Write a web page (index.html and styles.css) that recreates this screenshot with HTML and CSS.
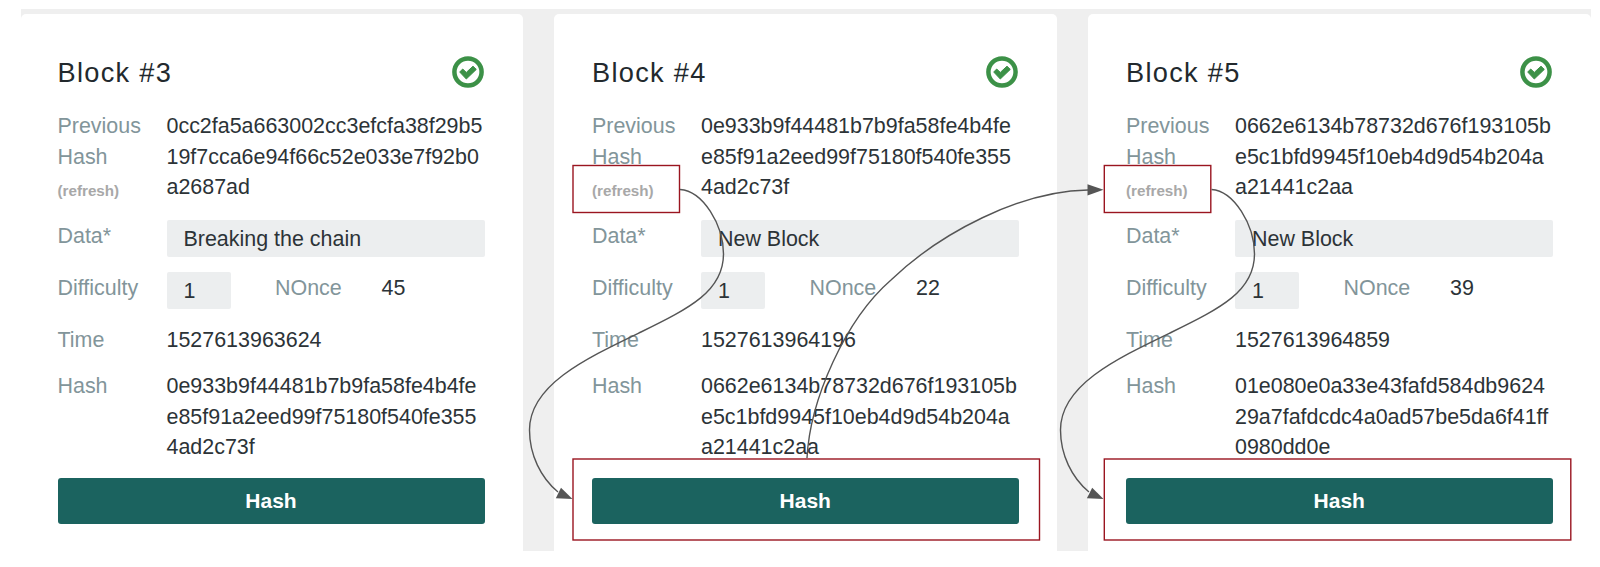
FILE: index.html
```html
<!DOCTYPE html>
<html lang="en">
<head>
  <meta charset="UTF-8">
  <meta name="viewport" content="width=device-width, initial-scale=1.0">
  <title>Blockchain</title>
  <link rel="stylesheet" href="styles.css">
</head>
<body>
  <svg class="defs" width="0" height="0">
    <symbol id="check" viewBox="-16 -16 32 32">
      <circle r="13.6" fill="none" stroke="#3c9147" stroke-width="4.5"/>
      <path d="M-8.3 0L-5.3 -3L-1.7 .4L5 -5.8L8.3 -2.6L-1.7 7Z" fill="#3c9147" stroke="#3c9147" stroke-width="1" stroke-linejoin="round"/>
    </symbol>
  </svg>

  <div class="chain">
    <div class="block">
      <div class="block-header">
        <h2 class="block-title">Block #3</h2>
        <svg class="block-status"><use href="#check"/></svg>
      </div>
      <div class="row row-previous">
        <div class="label">Previous Hash <span class="refresh">(refresh)</span></div>
        <div class="value">0cc2fa5a663002cc3efcfa38f29b5<br>19f7cca6e94f66c52e033e7f92b0<br>a2687ad</div>
      </div>
      <div class="row row-data">
        <div class="label">Data*</div>
        <div class="field">Breaking the chain</div>
      </div>
      <div class="row row-difficulty">
        <div class="label">Difficulty</div>
        <div class="field">1</div>
        <div class="label">NOnce</div>
        <div class="value">45</div>
      </div>
      <div class="row row-time">
        <div class="label">Time</div>
        <div class="value">1527613963624</div>
      </div>
      <div class="row row-hash">
        <div class="label">Hash</div>
        <div class="value">0e933b9f44481b7b9fa58fe4b4fe<br>e85f91a2eed99f75180f540fe355<br>4ad2c73f</div>
      </div>
      <button class="hash-button">Hash</button>
    </div>

    <div class="block">
      <div class="block-header">
        <h2 class="block-title">Block #4</h2>
        <svg class="block-status"><use href="#check"/></svg>
      </div>
      <div class="row row-previous">
        <div class="label">Previous Hash <span class="refresh">(refresh)</span></div>
        <div class="value">0e933b9f44481b7b9fa58fe4b4fe<br>e85f91a2eed99f75180f540fe355<br>4ad2c73f</div>
      </div>
      <div class="row row-data">
        <div class="label">Data*</div>
        <div class="field">New Block</div>
      </div>
      <div class="row row-difficulty">
        <div class="label">Difficulty</div>
        <div class="field">1</div>
        <div class="label">NOnce</div>
        <div class="value">22</div>
      </div>
      <div class="row row-time">
        <div class="label">Time</div>
        <div class="value">1527613964196</div>
      </div>
      <div class="row row-hash">
        <div class="label">Hash</div>
        <div class="value">0662e6134b78732d676f193105b<br>e5c1bfd9945f10eb4d9d54b204a<br>a21441c2aa</div>
      </div>
      <button class="hash-button">Hash</button>
    </div>

    <div class="block">
      <div class="block-header">
        <h2 class="block-title">Block #5</h2>
        <svg class="block-status"><use href="#check"/></svg>
      </div>
      <div class="row row-previous">
        <div class="label">Previous Hash <span class="refresh">(refresh)</span></div>
        <div class="value">0662e6134b78732d676f193105b<br>e5c1bfd9945f10eb4d9d54b204a<br>a21441c2aa</div>
      </div>
      <div class="row row-data">
        <div class="label">Data*</div>
        <div class="field">New Block</div>
      </div>
      <div class="row row-difficulty">
        <div class="label">Difficulty</div>
        <div class="field">1</div>
        <div class="label">NOnce</div>
        <div class="value">39</div>
      </div>
      <div class="row row-time">
        <div class="label">Time</div>
        <div class="value">1527613964859</div>
      </div>
      <div class="row row-hash">
        <div class="label">Hash</div>
        <div class="value">01e080e0a33e43fafd584db9624<br>29a7fafdcdc4a0ad57be5da6f41ff<br>0980dd0e</div>
      </div>
      <button class="hash-button">Hash</button>
    </div>
  </div>

  <!-- Refresh / hash order, drawn over the blocks -->
  <svg class="overlay" viewBox="0 0 1600 567">
    <g class="marks">
      <rect x="573" y="165.5" width="106.5" height="47"/>
      <rect x="573" y="459" width="466.5" height="81"/>
      <rect x="1104.3" y="165.5" width="106.5" height="47"/>
      <rect x="1104.3" y="459" width="466.5" height="81"/>
    </g>
    <g class="arrows">
      <path d="M680 189.5C703 191 723.5 225 723.5 254C723.5 291 690 308 641 332C585 359 529.5 385 529.5 430C529.5 455 541 478 558 492"/>
      <path d="M807 458C810 400 845 320 891 280C940 233 1020 191 1088 190"/>
      <path d="M1211.5 189.5C1234 191 1254.5 225 1254.5 254C1254.5 291 1221 308 1172 332C1116 359 1060.5 385 1060.5 430C1060.5 455 1072 478 1089 492"/>
    </g>
    <g class="heads">
      <path d="M572.5 499L561 487.8L555.8 498.3Z"/>
      <path d="M1103.5 189.7L1087.5 184.2V195.5Z"/>
      <path d="M1103.5 499L1092.2 487.8L1086.9 498.3Z"/>
    </g>
  </svg>
</body>
</html>
```

FILE: styles.css
```css
* {
  margin: 0;
  padding: 0;
  box-sizing: border-box;
}

body {
  font-family: "Liberation Sans", Arial, sans-serif;
  font-size: 21.45px;
  line-height: 30.67px;
  color: #2c3337;
  background: #fff;
  height: 567px;
  padding: 9px 9px 16px 21px;
  position: relative;
  overflow: hidden;
}

.defs {
  display: block;
}

.chain {
  display: grid;
  grid-template-columns: 502px 503.5px 503.5px;
  column-gap: 30.5px;
  height: 542px;
  padding-top: 5px;
  background: #efefef;
}

.block {
  background: #fff;
  border-radius: 5px 5px 0 0;
  padding: 42px 38.5px 0;
}

.block:first-child {
  padding-left: 36.5px;
}

.block-header {
  display: flex;
  justify-content: space-between;
  align-items: flex-start;
  height: 55px;
}

.block-title {
  font-size: 27.2px;
  font-weight: normal;
  letter-spacing: 1.3px;
  line-height: 33px;
  color: #22292d;
}

.block-status {
  width: 32px;
  height: 32px;
  margin-right: 1px;
}

.row {
  display: grid;
  grid-template-columns: 109px 1fr;
  align-items: start;
}

.row-previous {
  height: 109px;
}

.row-data {
  height: 52px;
}

.row-data .label,
.row-difficulty .label,
.row-difficulty .value {
  padding-top: 1px;
}

.row-difficulty {
  grid-template-columns: 109px 108.5px 106.5px 1fr;
  height: 53px;
}

.row-time {
  height: 46px;
}

.row-hash {
  height: 107px;
}

.label {
  color: #82959a;
}

.refresh {
  display: block;
  font-size: 15.2px;
  font-weight: bold;
  line-height: 37px;
  color: #a8a8a8;
}

.value {
  white-space: nowrap;
}

.field {
  height: 37px;
  padding: 4px 17px 0;
  background: #eceeef;
  border-radius: 2px;
}

.row-difficulty .field {
  width: 64px;
}

.hash-button {
  display: block;
  width: 100%;
  height: 46px;
  border: none;
  border-radius: 3px;
  background: #1b635f;
  color: #fff;
  font-family: inherit;
  font-size: 21px;
  font-weight: bold;
}

.overlay {
  position: absolute;
  top: 0;
  left: 0;
  width: 1600px;
  height: 567px;
}

.marks {
  fill: none;
  stroke: #9a1520;
  stroke-width: 1.4;
}

.arrows {
  fill: none;
  stroke: #555;
  stroke-width: 1.4;
}

.heads {
  fill: #555;
}
```
